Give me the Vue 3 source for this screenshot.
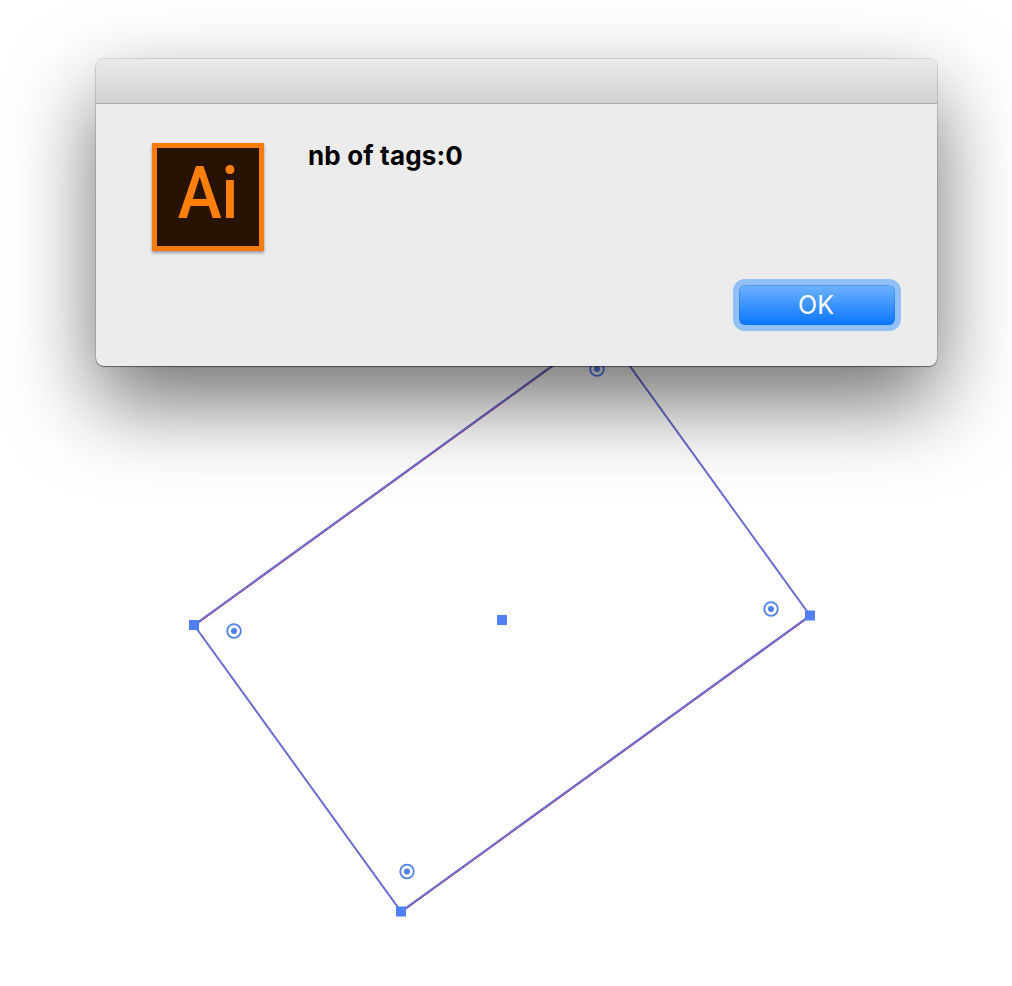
<template>
  <div class="page">
    <!-- artwork behind the dialog -->
    <svg class="artwork" width="1012" height="986" viewBox="0 0 1012 986">
      <g class="edge-red" transform="translate(0.5 0.8)">
        <line v-for="(e, i) in longEdges" :key="i" :x1="e[0][0]" :y1="e[0][1]" :x2="e[1][0]" :y2="e[1][1]" />
      </g>
      <polygon class="edge-blue" :points="outline" />
      <g v-for="p in anchors" :key="p.x">
        <circle class="ring" :cx="p.x" :cy="p.y" r="6.8" />
        <circle class="pip" :cx="p.x" :cy="p.y" r="3" />
      </g>
      <rect v-for="h in handles" :key="h.x" class="handle" :x="h.x - 5" :y="h.y - 5" width="10" height="10" />
    </svg>

    <div class="dialog">
      <div class="titlebar"></div>
      <div class="body">
        <div class="top">
          <div class="app-icon"><span>Ai</span></div>
          <p class="message">nb of tags:0</p>
        </div>
        <div class="actions">
          <button class="ok">OK</button>
        </div>
      </div>
    </div>
  </div>
</template>

<script setup>
const corners = [
  [194, 625],
  [603, 329],
  [810, 615.5],
  [401, 911.5],
]
const outline = corners.map(c => c.join(',')).join(' ')
const longEdges = [
  [corners[0], corners[1]],
  [corners[2], corners[3]],
]

const anchors = [
  { x: 234, y: 631 },
  { x: 771, y: 609 },
  { x: 407, y: 871.5 },
  { x: 597, y: 369 },
]

const handles = [
  { x: 194, y: 625 },
  { x: 810, y: 615.5 },
  { x: 401, y: 911.5 },
  { x: 502, y: 620 },
]
</script>

<style>
html, body { background: #fff; }
</style>

<style scoped>
.page {
  position: relative;
  width: 1012px;
  height: 986px;
  overflow: hidden;
  padding: 59px 75px 0 96px;
  box-sizing: border-box;
  background: #fff;
  font-family: Inter, "Liberation Sans", sans-serif;
}

.artwork {
  position: absolute;
  left: 0;
  top: 0;
}
.edge-red { fill: none; stroke: #c2185b; stroke-width: 1; }
.edge-blue { fill: none; stroke: #6a6ed0; stroke-width: 2; }
.ring { fill: none; stroke: #4f80ec; stroke-width: 1.8; }
.pip { fill: #4f80ec; }
.handle { fill: #4f80f5; }

/* ==== dialog ==== */
.dialog {
  position: relative;
  height: 307px;
  display: flex;
  flex-direction: column;
  border-radius: 8px;
  overflow: hidden;
  background: #ececec;
  box-shadow:
    0 0 0 0.5px rgba(0, 0, 0, 0.22),
    0 1px 1px rgba(0, 0, 0, 0.4),
    0 36px 84px rgba(0, 0, 0, 0.56);
}
.titlebar {
  height: 44px;
  flex: none;
  background: linear-gradient(#ebebeb, #d1d1d2);
  border-bottom: 1px solid #a8a8a8;
}
.body {
  flex: 1;
  display: flex;
  flex-direction: column;
  justify-content: space-between;
  padding: 39px 42px 41px 56px;
}
.top {
  display: flex;
  align-items: flex-start;
  gap: 44px;
}

.app-icon {
  width: 112px;
  height: 108px;
  box-sizing: border-box;
  padding-bottom: 6px;
  display: flex;
  align-items: center;
  justify-content: center;
  background: #281300;
  border: 5px solid #f57c0a;
  box-shadow: 0 2px 3px rgba(0, 0, 0, 0.35);
  color: #ff7f0a;
  font-family: Roboto, "Liberation Sans", sans-serif;
  font-size: 72px;
  font-weight: 500;
  line-height: 1;
}
.app-icon span {
  display: block;
  transform: scaleX(0.92);
}

.message {
  margin: 0;
  font-size: 26px;
  line-height: 26px;
  font-weight: 700;
  letter-spacing: 0.15px;
  color: #000;
}

.actions {
  display: flex;
  justify-content: flex-end;
}
.ok {
  width: 156px;
  height: 40px;
  padding: 0 2px 0 0;
  border: none;
  border-radius: 6px;
  background: linear-gradient(#6fb2ff, #0a76ff);
  box-shadow: 0 0 0 6px #90c0f6, inset 0 0 0 1px rgba(20, 110, 230, 0.35);
  color: #fff;
  font-family: Inter, "Liberation Sans", sans-serif;
  font-size: 25px;
}
</style>
